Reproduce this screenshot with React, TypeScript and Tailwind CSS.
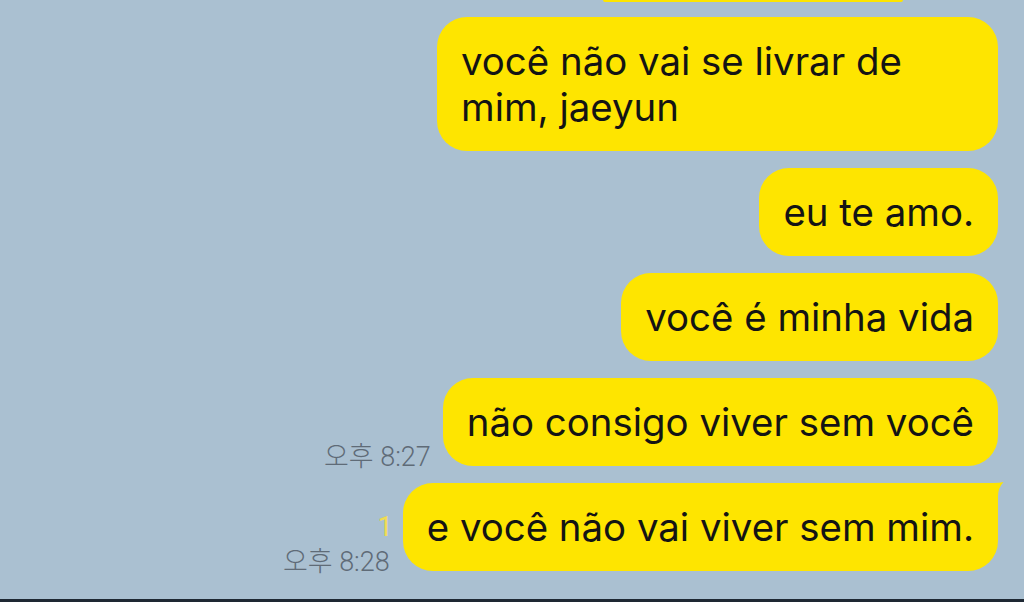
import React from "react";

const font = { fontFamily: "Inter, 'Noto Sans CJK KR', sans-serif" };
const metaFont = { fontFamily: "Roboto, 'Noto Sans CJK KR', sans-serif" };

const Bubble = ({ children, tail = false, className = "" }: { children: React.ReactNode; tail?: boolean; className?: string }) => (
  <div
    className={`relative bg-[#fee500] text-[#141414] text-[38.4px] leading-[46px] px-[24px] py-[21px] rounded-[30px] ${tail ? "rounded-tr-[4px]" : ""} ${className}`}
  >
    {children}
    {tail && (
      <svg className="absolute right-[-6px] top-[-1px]" width="20" height="26" viewBox="0 0 20 26">
        <path d="M0 1 L10 1 Q16 1 19.5 0 Q14 6 14 14 L14 26 L0 26 Z" fill="#fee500" />
      </svg>
    )}
  </div>
);

const Meta = ({ time, unread }: { time: string; unread?: string }) => (
  <div className="flex flex-col items-end text-[27px] leading-[26px] -mb-[4px]" style={metaFont}>
    {unread && <span className="text-[#f0dc52] mb-[9px] -mr-[3px]">{unread}</span>}
    <span className="text-[#5f6b77] font-light">{time}</span>
  </div>
);

export default function App() {
  return (
    <div className="w-[1024px] h-[602px] bg-[#aac0d1] overflow-hidden flex flex-col" style={font}>
      <div className="flex-1 flex flex-col items-end pr-[26px]">
        <div className="h-[2px] w-[300px] mr-[95px] bg-[#fee500] rounded-b-[2px]" />
        <Bubble className="mt-[15px] w-[561px]">
          você não vai se livrar de mim, jaeyun
        </Bubble>
        <Bubble className="mt-[17px]">eu te amo.</Bubble>
        <Bubble className="mt-[17px]">você é minha vida</Bubble>
        <div className="mt-[17px] flex items-end gap-[12px]">
          <Meta time="오후 8:27" />
          <Bubble>não consigo viver sem você</Bubble>
        </div>
        <div className="mt-[17px] flex items-end gap-[13px]">
          <Meta time="오후 8:28" unread="1" />
          <Bubble tail>e você não vai viver sem mim.</Bubble>
        </div>
      </div>
      <div className="h-[3px] bg-[#1e2833]" />
    </div>
  );
}
